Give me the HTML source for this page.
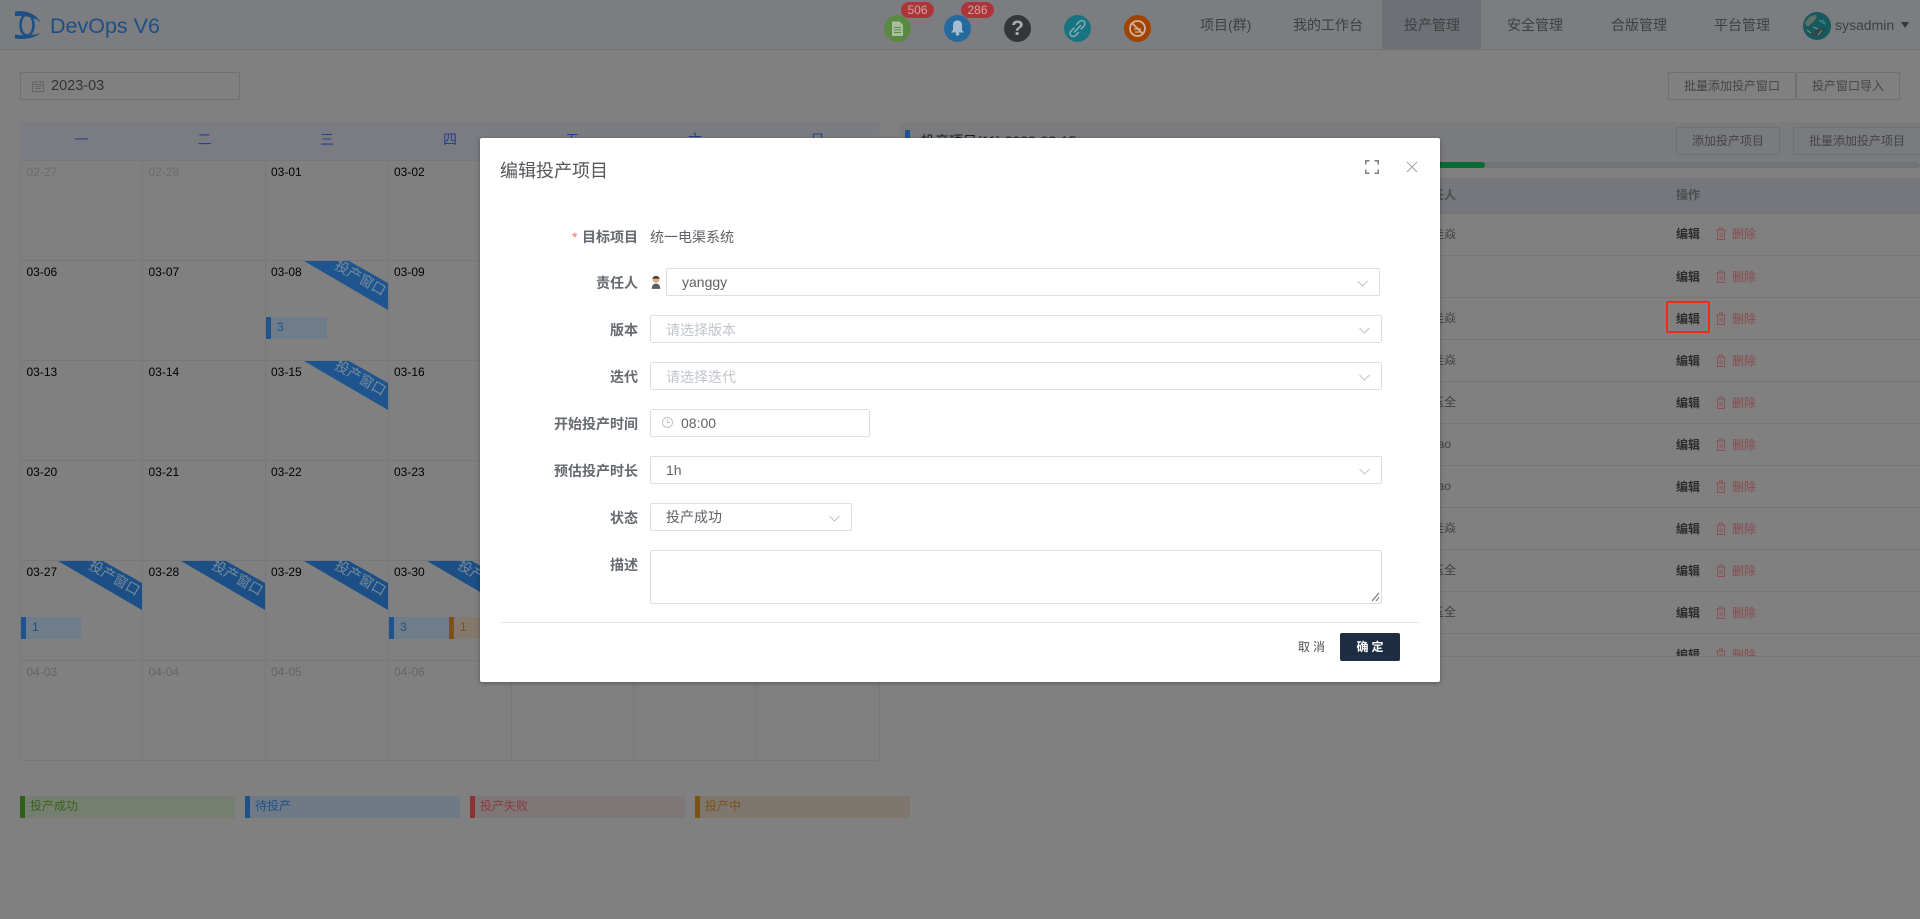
<!DOCTYPE html>
<html lang="zh"><head><meta charset="utf-8"><title>DevOps V6</title>
<style>
html,body{margin:0;padding:0;width:1920px;height:919px;overflow:hidden;background:#808080}
body{font-family:"Liberation Sans","Noto Sans CJK SC",sans-serif;position:relative;color:#404246}
.a{position:absolute;white-space:nowrap}
.hdr{left:0;top:0;width:1920px;height:49px;background:#7b7d81;border-bottom:1px solid #707175}
.nav{top:17px;font-size:14px;line-height:17px;color:#3d3f44}
.btn{box-sizing:border-box;height:28px;border:1px solid #6f7074;border-radius:2px;font-size:12px;line-height:26px;text-align:center;color:#434448;background:#808080}
.chip{height:22px;box-sizing:border-box;font-size:12px;line-height:21px}
.leg{height:22px;width:215px;top:796px;box-sizing:border-box;font-size:12px;line-height:20px;padding-left:5px}
.leg i{position:absolute;left:0;top:0;width:5px;height:22px}
.leg span{margin-left:5px}
.th{left:900px;top:178px;width:1020px;height:35px;background:#75777c;border-bottom:1px solid #707175}
.ln{left:900px;width:1020px;height:1px;background:#747579}
.edit{left:1676px;font-size:12px;font-weight:bold;color:#2c2c2e;line-height:14px}
.del{left:1732px;font-size:12px;color:#8a4a4e;line-height:14px}
.nm{font-size:12px;color:#3f4043;line-height:14px;left:1420px}
.modal{left:480px;top:138px;width:960px;height:544px;background:#fff;box-shadow:0 1px 4px rgba(0,0,0,.35);border-radius:2px}
.lab{left:518px;width:120px;text-align:right;font-size:14px;font-weight:bold;color:#666a70;line-height:18px}
.ipt{box-sizing:border-box;background:#fff;border:1px solid #dcdfe6;border-radius:2px;height:28px;font-size:14px;color:#606266;line-height:26px}
.ph{color:#c0c4cc;font-size:14px;line-height:28px}
</style></head><body>

<div class="a hdr"></div>
<svg class="a" style="left:15px;top:10px" width="28" height="30" viewBox="0 0 28 30">
<path d="M0 1.500C9 0 21 3 26 13C20 7 11 5.500 0 6Z" fill="#1c4f85"/>
<path d="M0 28.500C9 30 20 28 25.500 23C19 25.500 10 26 0 24.500Z" fill="#1c4f85"/>
<ellipse cx="12" cy="15" rx="6.500" ry="10.500" fill="none" stroke="#1c4f85" stroke-width="2.500"/>
</svg>
<div class="a" style="left:50px;top:13px;font-size:21.5px;line-height:26px;color:#1c4f85">DevOps V6</div>

<!-- header icons -->
<svg class="a" style="left:880px;top:0" width="280" height="46" viewBox="0 0 280 46">
<circle cx="17.500" cy="28.500" r="13.500" fill="#5a8a42"/>
<path d="M12 21.500h7.500l3.500 3.500v11h-11z" fill="#a9bda0"/><path d="M14 27.500h7M14 30h7M14 32.500h7" stroke="#5a8a42" stroke-width="1"/>
<circle cx="77.500" cy="28.500" r="13.500" fill="#246a9f"/>
<path d="M77.500 20.500c3.500 0 4.500 2.500 4.500 5v4.500l2 2.500H71l2-2.500v-4.500c0-2.500 1-5 4.500-5z" fill="#a6bdcf"/><circle cx="77.500" cy="34" r="1.800" fill="#a6bdcf"/>
<circle cx="137.500" cy="28.500" r="13.500" fill="#343639"/>
<circle cx="197.500" cy="28.500" r="13.500" fill="#177480"/>
<path d="M194 28l-3 3a3 3 0 0 0 4.500 4.500l3-3M201 29l3-3a3 3 0 0 0-4.500-4.500l-3 3M194.500 32l6-6.500" fill="none" stroke="#8fb0b5" stroke-width="1.400" stroke-linecap="round"/>
<circle cx="257.500" cy="28.500" r="13.500" fill="#a04500"/>
<circle cx="257.500" cy="28.500" r="7.500" fill="none" stroke="#d5b09a" stroke-width="1.800"/><path d="M252 23l11 11" stroke="#d5b09a" stroke-width="1.800"/><path d="M254 29h7M255 32h5" stroke="#d5b09a" stroke-width="1.200"/>
</svg>
<div class="a" style="left:1010px;top:17px;font-size:21px;line-height:24px;font-weight:bold;color:#a9abad;width:15px;text-align:center">?</div>
<div class="a" style="left:901px;top:2px;width:33px;height:16px;border-radius:8px;background:#ad3539;color:#d6a2a3;font-size:12px;line-height:16px;text-align:center">506</div>
<div class="a" style="left:961px;top:2px;width:33px;height:16px;border-radius:8px;background:#ad3539;color:#d6a2a3;font-size:12px;line-height:16px;text-align:center">286</div>

<div class="a" style="left:1382px;top:0;width:99px;height:49px;background:#6f7075"></div>
<div class="a nav" style="left:1200px">项目(群)</div>
<div class="a nav" style="left:1293px">我的工作台</div>
<div class="a nav" style="left:1404px">投产管理</div>
<div class="a nav" style="left:1507px">安全管理</div>
<div class="a nav" style="left:1611px">合版管理</div>
<div class="a nav" style="left:1714px">平台管理</div>
<svg class="a" style="left:1803px;top:12px" width="28" height="28" viewBox="0 0 28 28">
<circle cx="14" cy="14" r="14" fill="#17595c"/><path d="M2 11c3-6 7-8 11-8 2 3-2 6-4 8s-5 6-7 0z" fill="#5f7069"/><path d="M7 23c3-4 8-6 15-8l-2 6c-3 3-9 5-13 2z" fill="#30474a"/><path d="M16 8l7 4M10 15l5 2M4 18l4 3M19 18l-4 5" stroke="#7f968c" stroke-width="1"/><path d="M20 6l3 7-5-2z" fill="#1f7f80"/>
</svg>
<div class="a" style="left:1835px;top:17px;font-size:14px;line-height:17px;color:#3d3f44">sysadmin</div>
<div class="a" style="left:1901px;top:22px;width:0;height:0;border-left:4px solid transparent;border-right:4px solid transparent;border-top:6px solid #35373b"></div>

<!-- toolbar -->
<div class="a" style="left:20px;top:72px;width:220px;height:28px;box-sizing:border-box;border:1px solid #6f7074;border-radius:2px"></div>
<svg class="a" style="left:32px;top:80px" width="12" height="12" viewBox="0 0 12 12"><path d="M.5 2h11v9.500H.5zM.5 4.500h11" fill="none" stroke="#65666a"/><path d="M3 1v2M9 1v2M2.500 6.500h7M2.500 8.500h7" stroke="#65666a"/></svg>
<div class="a" style="left:51px;top:77px;font-size:14.5px;line-height:19px;color:#333437">2023-03</div>
<div class="a btn" style="left:1668px;top:72px;width:128px">批量添加投产窗口</div>
<div class="a btn" style="left:1796px;top:72px;width:104px">投产窗口导入</div>

<!-- calendar -->
<svg class="a" style="left:0;top:0;font-family:'Liberation Sans','Noto Sans CJK SC',sans-serif" width="900" height="780" viewBox="0 0 900 780">
<rect x="20" y="122" width="859.500" height="38" fill="#7a7c82"/>
<g font-size="14" fill="#25408f" text-anchor="middle">
<text x="81.500" y="144.500">一</text><text x="204.500" y="144.500">二</text><text x="327" y="144.500">三</text><text x="450" y="144.500">四</text><text x="572.500" y="144.500">五</text><text x="695" y="144.500">六</text><text x="817.500" y="144.500">日</text>
</g>
<g stroke="#77787b" stroke-width="1" fill="none">
<path d="M20.500 160.500H879.500M20.500 260.500H879.500M20.500 360.500H879.500M20.500 460.500H879.500M20.500 560.500H879.500M20.500 660.500H879.500M20.500 760.500H879.500"/>
<path d="M20.500 160.500V760.500M142.500 160.500V760.500M265.500 160.500V760.500M388.500 160.500V760.500M511.500 160.500V760.500M633.500 160.500V760.500M756.500 160.500V760.500M879.500 160.500V760.500"/>
</g>
<!-- ribbons -->
<g fill="#1e558e">
<path d="M304 261h45l39 22v27z"/>
<path d="M304 361h45l39 22v27z"/>
</g>
<g fill="#1b4f85">
<path d="M58 561h45l39 22v27z"/><path d="M181 561h45l39 22v27z"/><path d="M304 561h45l39 22v27z"/><path d="M427 561h45l39 22v27z"/>
</g>
<g font-size="14" fill="#7a8a9a" text-anchor="middle">
<text transform="translate(358,282) rotate(30)">投产窗口</text>
<text transform="translate(358,382) rotate(30)">投产窗口</text>
<text transform="translate(112,582) rotate(30)">投产窗口</text>
<text transform="translate(235,582) rotate(30)">投产窗口</text>
<text transform="translate(358,582) rotate(30)">投产窗口</text>
<text transform="translate(481,582) rotate(30)">投产窗口</text>
</g>
<g font-size="12" fill="#000">
<text x="26.500" y="276" fill="#000">03-06</text><text x="148.500" y="276">03-07</text><text x="271" y="276">03-08</text><text x="394" y="276">03-09</text>
<text x="271" y="176">03-01</text><text x="394" y="176">03-02</text>
<text x="26.500" y="376">03-13</text><text x="148.500" y="376">03-14</text><text x="271" y="376">03-15</text><text x="394" y="376">03-16</text>
<text x="26.500" y="476">03-20</text><text x="148.500" y="476">03-21</text><text x="271" y="476">03-22</text><text x="394" y="476">03-23</text>
<text x="26.500" y="576">03-27</text><text x="148.500" y="576">03-28</text><text x="271" y="576">03-29</text><text x="394" y="576">03-30</text>
</g>
<g font-size="12" fill="#6a6b6d">
<text x="26.500" y="176">02-27</text><text x="148.500" y="176">02-28</text>
</g>
<g font-size="12" fill="#646568">
<text x="26.500" y="676">04-03</text><text x="148.500" y="676">04-04</text><text x="271" y="676">04-05</text><text x="394" y="676">04-06</text>
</g>
</svg>

<!-- chips -->
<div class="a chip" style="left:266px;top:317px;width:61px;background:#6f7c89;border-left:5px solid #1e558e;color:#1f5289;padding-left:6px">3</div>
<div class="a chip" style="left:21px;top:617px;width:60px;background:#6f7c89;border-left:5px solid #1e558e;color:#1f5289;padding-left:6px">1</div>
<div class="a chip" style="left:389px;top:617px;width:60px;background:#6f7c89;border-left:5px solid #1e558e;color:#1f5289;padding-left:6px">3</div>
<div class="a chip" style="left:449px;top:617px;width:60px;background:#84796d;border-left:5px solid #7c5218;color:#7c5218;padding-left:6px">1</div>

<!-- legend -->
<div class="a leg" style="left:20px;background:#767e72;color:#37641a"><i style="background:#2f5f1a"></i><span>投产成功</span></div>
<div class="a leg" style="left:245px;background:#6f7a86;color:#1e5189"><i style="background:#1e5189"></i><span>待投产</span></div>
<div class="a leg" style="left:470px;background:#7e7777;color:#8a3a42"><i style="background:#8a3236"></i><span>投产失败</span></div>
<div class="a leg" style="left:695px;background:#7e776e;color:#7c5218"><i style="background:#7c5218"></i><span>投产中</span></div>

<!-- right panel -->
<div class="a" style="left:900px;top:122px;width:1020px;height:40px;background:#7a7b7d"></div>
<div class="a" style="left:905px;top:130px;width:5px;height:24px;background:#1e558e"></div>
<div class="a" style="left:921px;top:133px;font-size:14px;line-height:17px;color:#1f1f20">投产项目(11) 2023-03-15</div>
<div class="a btn" style="left:1676px;top:127px;width:104px;background:#7a7b7d">添加投产项目</div>
<div class="a btn" style="left:1793px;top:127px;width:140px;background:#7a7b7d;text-align:left;padding-left:15px">批量添加投产项目</div>
<div class="a" style="left:900px;top:162px;width:1020px;height:6px;background:#727377;border-radius:3px"></div>
<div class="a" style="left:900px;top:162px;width:585px;height:6px;background:#0a6a35;border-radius:3px"></div>
<div class="a th"></div>
<div class="a" style="left:1420px;top:188px;font-size:12px;font-weight:bold;line-height:14px;color:#4d4e52">责任人</div>
<div class="a" style="left:1676px;top:188px;font-size:12px;font-weight:bold;line-height:14px;color:#4d4e52">操作</div>

<div class="a ln" style="top:255px"></div><div class="a ln" style="top:297px"></div><div class="a ln" style="top:339px"></div><div class="a ln" style="top:381px"></div><div class="a ln" style="top:423px"></div><div class="a ln" style="top:465px"></div><div class="a ln" style="top:507px"></div><div class="a ln" style="top:549px"></div><div class="a ln" style="top:591px"></div><div class="a ln" style="top:633px"></div>

<div class="a nm" style="top:227px">王佳焱</div>
<div class="a nm" style="top:311px">王佳焱</div>
<div class="a nm" style="top:353px">王佳焱</div>
<div class="a nm" style="top:395px">张玉全</div>
<div class="a nm" style="top:437px;left:1400px;width:51px;text-align:right">zhangtao</div>
<div class="a nm" style="top:479px;left:1400px;width:51px;text-align:right">zhangtao</div>
<div class="a nm" style="top:521px">王佳焱</div>
<div class="a nm" style="top:563px">张玉全</div>
<div class="a nm" style="top:605px">张玉全</div>

<div class="a edit" style="top:227px">编辑</div><div class="a del" style="top:227px">删除</div>
<div class="a edit" style="top:270px">编辑</div><div class="a del" style="top:270px">删除</div>
<div class="a edit" style="top:312px">编辑</div><div class="a del" style="top:312px">删除</div>
<div class="a edit" style="top:354px">编辑</div><div class="a del" style="top:354px">删除</div>
<div class="a edit" style="top:396px">编辑</div><div class="a del" style="top:396px">删除</div>
<div class="a edit" style="top:438px">编辑</div><div class="a del" style="top:438px">删除</div>
<div class="a edit" style="top:480px">编辑</div><div class="a del" style="top:480px">删除</div>
<div class="a edit" style="top:522px">编辑</div><div class="a del" style="top:522px">删除</div>
<div class="a edit" style="top:564px">编辑</div><div class="a del" style="top:564px">删除</div>
<div class="a edit" style="top:606px">编辑</div><div class="a del" style="top:606px">删除</div>
<div class="a edit" style="top:648px">编辑</div><div class="a del" style="top:648px">删除</div>

<svg class="a" style="left:1716px;top:227px" width="10" height="434" viewBox="0 0 10 434" fill="none" stroke="#8a5055" stroke-width=".9">
<path d="M.5 3h9M3.500 3V1h3v2M1.500 3v9.500h7V3M4 5.500v5M6 5.500v5"/>
<path transform="translate(0,43)" d="M.5 3h9M3.500 3V1h3v2M1.500 3v9.500h7V3M4 5.500v5M6 5.500v5"/>
<path transform="translate(0,85)" d="M.5 3h9M3.500 3V1h3v2M1.500 3v9.500h7V3M4 5.500v5M6 5.500v5"/>
<path transform="translate(0,127)" d="M.5 3h9M3.500 3V1h3v2M1.500 3v9.500h7V3M4 5.500v5M6 5.500v5"/>
<path transform="translate(0,169)" d="M.5 3h9M3.500 3V1h3v2M1.500 3v9.500h7V3M4 5.500v5M6 5.500v5"/>
<path transform="translate(0,211)" d="M.5 3h9M3.500 3V1h3v2M1.500 3v9.500h7V3M4 5.500v5M6 5.500v5"/>
<path transform="translate(0,253)" d="M.5 3h9M3.500 3V1h3v2M1.500 3v9.500h7V3M4 5.500v5M6 5.500v5"/>
<path transform="translate(0,295)" d="M.5 3h9M3.500 3V1h3v2M1.500 3v9.500h7V3M4 5.500v5M6 5.500v5"/>
<path transform="translate(0,337)" d="M.5 3h9M3.500 3V1h3v2M1.500 3v9.500h7V3M4 5.500v5M6 5.500v5"/>
<path transform="translate(0,379)" d="M.5 3h9M3.500 3V1h3v2M1.500 3v9.500h7V3M4 5.500v5M6 5.500v5"/>
<path transform="translate(0,421)" d="M.5 3h9M3.500 3V1h3v2M1.500 3v9.500h7V3M4 5.500v5M6 5.500v5"/>
</svg>
<div class="a" style="left:1666px;top:301px;width:44px;height:32px;box-sizing:border-box;border:2px solid #ef2a1a;border-radius:2px"></div>
<div class="a" style="left:900px;top:656px;width:1020px;height:14px;background:#808080;border-top:1px solid #747579"></div>

<!-- modal -->
<div class="a modal"></div>
<div class="a" style="left:500px;top:160px;font-size:18px;line-height:22px;color:#55565a">编辑投产项目</div>
<svg class="a" style="left:1365px;top:160px" width="14" height="14" viewBox="0 0 14 14" fill="none" stroke="#85868a" stroke-width="1.600"><path d="M.8 4.500V.8h3.700M9.500.8h3.700v3.700M13.200 9.500v3.700H9.500M4.500 13.200H.8V9.500"/></svg>
<svg class="a" style="left:1406px;top:161px" width="12" height="12" viewBox="0 0 12 12" fill="none" stroke="#a0a3a8" stroke-width="1"><path d="M1 1l10 10M11 1L1 11"/></svg>

<div class="a" style="left:572px;top:230px;font-size:14px;line-height:14px;color:#f56c6c">*</div>
<div class="a lab" style="top:228px">目标项目</div>
<div class="a" style="left:650px;top:228px;font-size:14px;line-height:18px;color:#606266">统一电渠系统</div>

<div class="a lab" style="top:274px">责任人</div>
<svg class="a" style="left:650px;top:275px" width="12" height="15" viewBox="0 0 10 14"><circle cx="5" cy="4" r="3.300" fill="#d0ad8a"/><path d="M1.700 3.500c0-3.500 6.600-3.500 6.600 0" fill="#5a4530"/><path d="M1 13c0-4 2-5 4-5s4 1 4 5z" fill="#55605f"/></svg>
<div class="a ipt" style="left:666px;top:268px;width:714px;padding-left:15px">yanggy</div>
<svg class="a" style="left:1357px;top:280px" width="11" height="7" viewBox="0 0 11 7" fill="none" stroke="#c0c4cc" stroke-width="1"><path d="M.5 1l5 5 5-5"/></svg>

<div class="a lab" style="top:321px">版本</div>
<div class="a ipt ph" style="left:650px;top:315px;width:732px;padding-left:15px;color:#c0c4cc">请选择版本</div>
<svg class="a" style="left:1359px;top:327px" width="11" height="7" viewBox="0 0 11 7" fill="none" stroke="#c0c4cc" stroke-width="1"><path d="M.5 1l5 5 5-5"/></svg>

<div class="a lab" style="top:368px">迭代</div>
<div class="a ipt ph" style="left:650px;top:362px;width:732px;padding-left:15px;color:#c0c4cc">请选择迭代</div>
<svg class="a" style="left:1359px;top:374px" width="11" height="7" viewBox="0 0 11 7" fill="none" stroke="#c0c4cc" stroke-width="1"><path d="M.5 1l5 5 5-5"/></svg>

<div class="a lab" style="top:415px">开始投产时间</div>
<div class="a ipt" style="left:650px;top:409px;width:220px;padding-left:30px">08:00</div>
<svg class="a" style="left:662px;top:417px" width="11" height="11" viewBox="0 0 11 11" fill="none" stroke="#c0c4cc" stroke-width="1"><circle cx="5.500" cy="5.500" r="5"/><path d="M5.500 2.500v3h2.500"/></svg>

<div class="a lab" style="top:462px">预估投产时长</div>
<div class="a ipt" style="left:650px;top:456px;width:732px;padding-left:15px">1h</div>
<svg class="a" style="left:1359px;top:468px" width="11" height="7" viewBox="0 0 11 7" fill="none" stroke="#c0c4cc" stroke-width="1"><path d="M.5 1l5 5 5-5"/></svg>

<div class="a lab" style="top:509px">状态</div>
<div class="a ipt" style="left:650px;top:503px;width:202px;padding-left:15px;font-size:14px;line-height:27px">投产成功</div>
<svg class="a" style="left:829px;top:515px" width="11" height="7" viewBox="0 0 11 7" fill="none" stroke="#c0c4cc" stroke-width="1"><path d="M.5 1l5 5 5-5"/></svg>

<div class="a lab" style="top:556px">描述</div>
<div class="a ipt" style="left:650px;top:550px;width:732px;height:54px"></div>
<svg class="a" style="left:1371px;top:592px" width="9" height="10" viewBox="0 0 9 10" fill="none" stroke="#6a6a6a" stroke-width="1"><path d="M1 9l7-8M5 9l3-4"/></svg>

<div class="a" style="left:500px;top:622px;width:920px;height:1px;background:#e4e7ed"></div>
<div class="a" style="left:1298px;top:640px;font-size:12px;line-height:15px;letter-spacing:3px;color:#4f5156">取消</div>
<div class="a" style="left:1340px;top:633px;width:60px;height:28px;border-radius:2px;background:#1f2d44;color:#fff;font-size:12px;font-weight:bold;line-height:28px;text-align:center;letter-spacing:3px;text-indent:3px">确定</div>
</body></html>
